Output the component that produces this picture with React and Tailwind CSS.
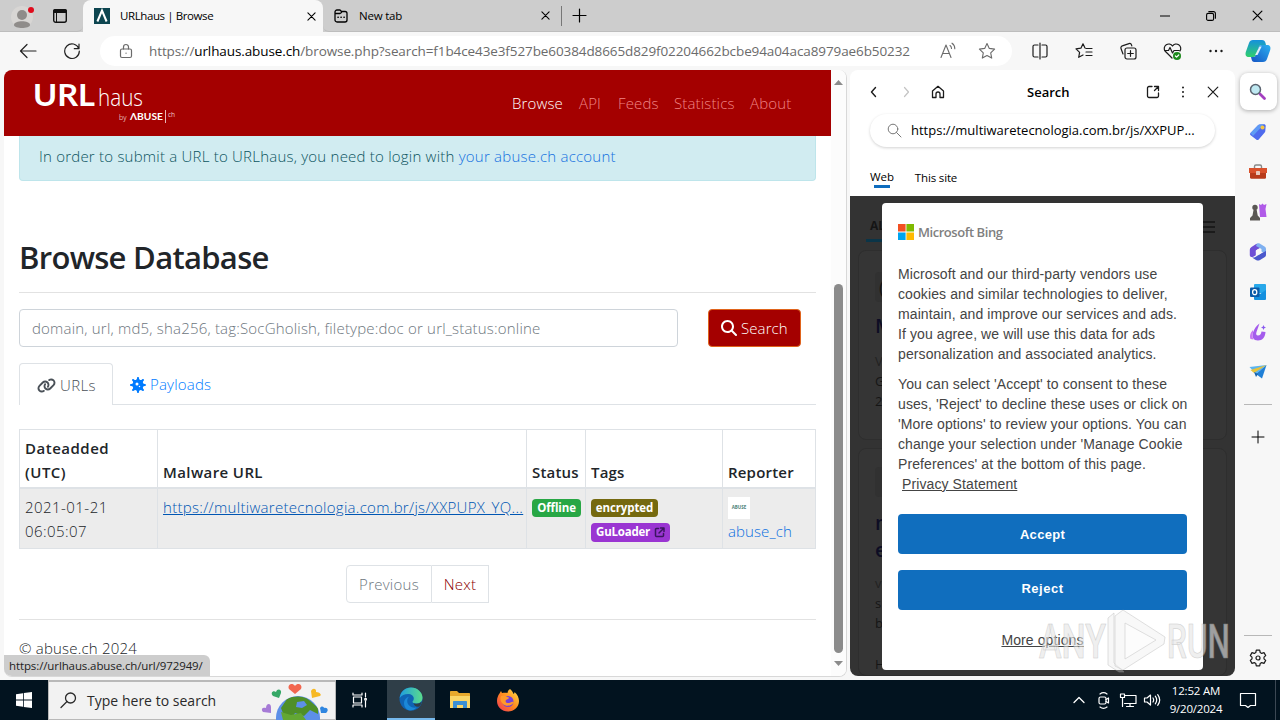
import { FaLink, FaMagnifyingGlass, FaVirus } from "react-icons/fa6";

const NAV = [
  { label: "Browse", cls: "w-[67px] text-white" },
  { label: "API", cls: "w-[39px]" },
  { label: "Feeds", cls: "w-[56px]" },
  { label: "Statistics", cls: "w-[76px]" },
  { label: "About", cls: "w-[81px]" },
];

function Icon({ size = 20, sw = 1.2, className = "", children, box = 20 }) {
  return (
    <svg
      width={size}
      height={size}
      viewBox={`0 0 ${box} ${box}`}
      fill="none"
      stroke="currentColor"
      strokeWidth={sw}
      strokeLinecap="round"
      strokeLinejoin="round"
      className={`shrink-0 ${className}`}
    >
      {children}
    </svg>
  );
}

function Close({ size = 10, sw = 1.2 }) {
  return (
    <Icon size={size} box={10} sw={sw}>
      <path d="M1 1l8 8M9 1l-8 8" />
    </Icon>
  );
}

function TabStrip() {
  return (
    <div className="flex h-8 shrink-0 bg-[#cdcdcd]">
      <div className="flex w-[83px] items-center rounded-br-md border-b border-[#bdbdbd] pl-[11px]">
        <svg width="24" height="28" viewBox="0 0 24 28" className="shrink-0">
          <circle cx="11" cy="15" r="11" fill="#d8d6d4" />
          <circle cx="11" cy="13" r="5" fill="#8f8c8a" />
          <path d="M3 23c0-5 16-5 16 0 0 4-16 4-16 0z" fill="#8f8c8a" />
          <circle cx="20" cy="8" r="3" fill="#e00b1c" />
        </svg>
        <svg width="16" height="16" viewBox="0 0 16 16" className="ml-[17px] shrink-0">
          <rect x="1.7" y="1.7" width="12.6" height="12.6" rx="2" fill="none" stroke="#111" strokeWidth="1.4" />
          <path d="M1 5V3a2 2 0 0 1 2-2h10a2 2 0 0 1 2 2v2z" fill="#111" />
          <path d="M4.5 5v9" stroke="#111" />
        </svg>
      </div>
      <div className="flex w-[240px] items-center rounded-t-lg bg-[#f7f7f7] pl-[11px]">
        <svg width="16" height="16" viewBox="0 0 16 16" className="shrink-0">
          <rect width="16" height="16" fill="#0d4550" />
          <path d="M3.4 13.5L8 2.5l4.6 11" stroke="#fff" strokeWidth="2" fill="none" />
        </svg>
        <span className="ml-2.5 w-[187px] text-[11.5px] tracking-[-0.4px]">URLhaus | Browse</span>
        <Close size={9} />
      </div>
      <div className="flex w-[238px] items-center rounded-bl-md border-b border-[#bdbdbd] pl-[10px]">
        <Icon size={16} box={16} sw={1.3}>
          <path d="M2 4a2 2 0 0 1 2-2h3l1.5 1.5H12a2 2 0 0 1 2 2V12a2 2 0 0 1-2 2H4a2 2 0 0 1-2-2zM2 5.5h5l1.5-1" />
          <path d="M5 9.2h.2M8 9.2h.2M11 9.2h.2" strokeWidth="1.6" />
        </Icon>
        <span className="ml-[10px] w-[182px] text-[11.5px] tracking-[-0.2px]">New tab</span>
        <Close size={9} />
      </div>
      <div className="flex flex-1 items-center border-b border-[#bdbdbd]">
        <div className="h-5 w-px bg-[#777]" />
        <Icon size={15} box={15} className="ml-[10px]">
          <path d="M7.5 1v13M1 7.5h13" />
        </Icon>
        <div className="ml-auto flex items-center gap-9 pr-[17px]">
          <Icon size={10} box={10} sw={1}>
            <path d="M0 5h10" />
          </Icon>
          <Icon size={10} box={10} sw={1.1}>
            <rect x=".6" y="2.4" width="7" height="7" rx="1.5" />
            <path d="M2.8.6h4.800a1.8 1.8 0 0 1 1.8 1.8v4.800" />
          </Icon>
          <Close size={11} sw={1.1} />
        </div>
      </div>
    </div>
  );
}

function Toolbar() {
  return (
    <div className="flex h-[38px] shrink-0 items-center bg-[#f7f7f7]">
      <div className="flex w-[100px] items-center pl-[19px] text-[#222]">
        <Icon size={18} box={18}>
          <path d="M1.5 9H17M8 2.5L1.5 9 8 15.5" />
        </Icon>
        <Icon size={18} box={18} className="ml-[26px]">
          <path d="M15.8 6.5A7.3 7.3 0 1 0 16.3 9M16 2v4.7h-4.7" />
        </Icon>
      </div>
      <div className="flex h-[30px] w-[912px] items-center rounded-full bg-white pl-[18px] text-[#6b6b6b]">
        <Icon size={16} box={16}>
          <rect x="2.5" y="6" width="11" height="8.5" rx="1.5" />
          <path d="M5.5 6V4a2.5 2.5 0 0 1 5 0v2M8 10.2h.1" />
        </Icon>
        <span className="ml-[15px] w-[790px] whitespace-nowrap text-[13.5px] tracking-[-0.1px]">
          https://<span className="text-black">urlhaus.abuse.ch</span>
          /browse.php?search=f1b4ce43e3f527be60384d8665d829f02204662bcbe94a04aca8979ae6b50232
        </span>
        <Icon size={18} box={18} sw={1.1}>
          <path d="M2 15.500L7 3l5 12.500M3.800 11.500h6.400M11 3.500c1 .7 1.500 1.700 1.500 3M13 1.200c2 1.300 2.800 3.200 2.800 5.500" />
        </Icon>
        <Icon size={18} box={18} sw={1.1} className="ml-[21px]">
          <path d="M9 1.500l2.300 4.900 5.300.7-3.900 3.700 1 5.300L9 13.500l-4.700 2.600 1-5.300L1.400 7.100l5.300-.7z" />
        </Icon>
      </div>
      <div className="flex flex-1 items-center pl-[19px] text-[#1c1c1c]">
        <Icon size={18} box={18}>
          <path d="M7 3H3.500A1.500 1.500 0 0 0 2 4.500v9A1.500 1.500 0 0 0 3.500 15H7M11 3h3.500A1.500 1.500 0 0 1 16 4.500v9a1.500 1.500 0 0 1-1.500 1.500H11M9 1v16" />
        </Icon>
        <Icon size={18} box={18} className="ml-[26px]">
          <path d="M10 6L8 1.800 5.900 6.200l-4.900.7 3.600 3.500-.9 4.900L8 13M11 6.500h6M11 10h6M11 13.500h6" />
        </Icon>
        <Icon size={18} box={18} className="ml-[26px]">
          <rect x="6" y="6" width="11" height="11" rx="2" />
          <path d="M11.500 8.700v5.600M8.700 11.500h5.600M4 12L2 6.500a2 2 0 0 1 1.300-2.600L10 1.600a2 2 0 0 1 2.500 1.300l.3 1" />
        </Icon>
        <Icon size={19} box={19} className="ml-[26px]">
          <path d="M9 16L2 9a4 4 0 0 1 7.500-5A4 4 0 0 1 17 9M1.500 8.500h4l1.500-3 2.500 5.500 1.500-2.500h5" />
          <circle cx="14" cy="14" r="4" fill="#1d8a1d" stroke="none" />
          <path d="M12.400 14l1.200 1.200 2.100-2.200" stroke="#fff" />
        </Icon>
        <Icon size={18} box={18} className="ml-[25px]">
          <g fill="currentColor" stroke="none">
            <circle cx="3.500" cy="9" r="1.200" />
            <circle cx="9" cy="9" r="1.200" />
            <circle cx="14.500" cy="9" r="1.200" />
          </g>
        </Icon>
        <svg width="26" height="24" viewBox="0 0 26 24" className="ml-[20px] shrink-0">
          <defs>
            <linearGradient id="copA" x1="0" y1="0" x2="0" y2="1">
              <stop offset="0" stopColor="#1590dd" />
              <stop offset="1" stopColor="#2fd06c" />
            </linearGradient>
            <linearGradient id="copB" x1="1" y1="0" x2="0" y2="1">
              <stop offset="0" stopColor="#2bb0f0" />
              <stop offset="1" stopColor="#1554c4" />
            </linearGradient>
          </defs>
          <path d="M8 1h9c2 0 3 1 3.500 3L21 6h-4c-2 0-3 1-3.600 3l-2 6.500c-.6 1.500-1.400 2.500-3.400 2.500H4c-3 0-4-2-3.200-5L4 4c.6-2 2-3 4-3z" fill="url(#copA)" />
          <path d="M18 23H9.500C7.500 23 7 22 6.500 20L6 18h2c2 0 2.800-1 3.400-3l2-6.500C14 7 15 6 17 6h5c3 0 4 2 3.200 5L22 20c-.6 2-2 3-4 3z" fill="url(#copB)" />
          <path d="M14.500 7.500h2.200L12.500 16h-2.400z" fill="#fff" fillOpacity=".85" />
        </svg>
      </div>
    </div>
  );
}

function SiteHeader() {
  return (
    <div className="flex h-[66px] shrink-0 items-start bg-[#a40000]">
      <svg width="160" height="48" viewBox="0 0 160 48" className="ml-[24px] mt-[6px] shrink-0" fill="#fff" fontFamily="Lato, sans-serif">
        <text x="5" y="30" fontSize="31" fontWeight="700" textLength="62" lengthAdjust="spacingAndGlyphs">URL</text>
        <text x="70" y="30" fontSize="23" fontWeight="300" fontFamily="Open Sans, sans-serif" textLength="45" lengthAdjust="spacingAndGlyphs">haus</text>
        <text x="91" y="44" fontSize="7" fontWeight="300" fontFamily="Open Sans, sans-serif">by</text>
        <text x="102" y="44" fontSize="10" fontWeight="700" textLength="33" lengthAdjust="spacingAndGlyphs">ΛBUSE</text>
        <path d="M137.500 34v13" stroke="#e9b5b5" />
        <text x="140" y="41" fontSize="6.5" fontFamily="Open Sans, sans-serif" fill="#f0c8c8">ch</text>
      </svg>
      <div className="ml-auto mt-[21px] flex text-[15px] leading-6 font-light tracking-[0.15px] text-[#f08585]">
        {NAV.map((n) => (
          <span key={n.label} className={n.cls}>
            {n.label}
          </span>
        ))}
      </div>
    </div>
  );
}

function MalwareTable() {
  const th = "border border-[#dee2e6] px-[5px] pb-[3px] font-semibold";
  const td = "border border-t-2 border-[#dee2e6] px-[5px]";

  return (
    <table className="mt-[24px] w-[796px] shrink-0 table-fixed border-collapse text-[15px] leading-6 text-[#212529]">
      <colgroup>
        <col className="w-[138px]" />
        <col className="w-[369px]" />
        <col className="w-[59px]" />
        <col className="w-[137px]" />
        <col className="w-[93px]" />
      </colgroup>
      <thead>
        <tr className="h-[58px] text-left align-bottom tracking-[0.2px]">
          <th className={`${th} tracking-[0.5px]`}>
            Dateadded
            <br />
            (UTC)
          </th>
          <th className={`${th} tracking-[0.4px]`}>Malware URL</th>
          <th className={th}>Status</th>
          <th className={th}>Tags</th>
          <th className={th}>Reporter</th>
        </tr>
      </thead>
      <tbody>
        <tr className="h-[61px] bg-[#ececec] align-top font-light">
          <td className={`${td} pt-[6px] tracking-[0.45px]`}>
            2021-01-21
            <br />
            06:05:07
          </td>
          <td className={`${td} pt-[6px] tracking-[0.3px] whitespace-nowrap text-[#0056b3] underline`}>
            https://multiwaretecnologia.com.br/js/XXPUPX_YQ...
          </td>
          <td className={`${td} pt-[10px]`}>
            <div className="flex h-[18px] w-[49px] items-center justify-center rounded bg-[#28a745] text-[11.5px] font-bold tracking-[-0.1px] text-white">
              Offline
            </div>
          </td>
          <td className={`${td} pt-[10px]`}>
            <div className="flex h-[18px] w-[67px] items-center justify-center rounded bg-[#75690f] text-[11.5px] font-bold tracking-[-0.1px] text-white">
              encrypted
            </div>
            <div className="mt-[6px] flex h-[19px] w-[79px] items-center gap-[4px] rounded bg-[#9a35d2] pl-[5px] text-[11.5px] font-bold tracking-[-0.2px] text-white">
              GuLoader
              <Icon size={11} box={11} sw={1.5} className="text-[#3b1560]">
                <path d="M4.500 1.500H2.500a1 1 0 0 0-1 1v6a1 1 0 0 0 1 1h6a1 1 0 0 0 1-1v-2M6.500 1h3.500v3.500M9.500 1.500L5 6" />
              </Icon>
            </div>
          </td>
          <td className={`${td} pt-[8px] text-[#0a6fe0]`}>
            <div className="flex h-[22px] w-[22px] items-center justify-center bg-white text-[4.5px] leading-none font-bold text-[#4d7f76]">
              ABUSE
            </div>
            <div className="leading-6 tracking-[0.1px]">abuse_ch</div>
          </td>
        </tr>
      </tbody>
    </table>
  );
}

function Site() {
  return (
    <div className="relative flex h-[607px] w-[843px] shrink-0 overflow-hidden rounded-lg border-r border-b border-[#d8d8d8] bg-white">
      <div className="flex w-[827px] flex-col">
        <SiteHeader />
        <div className="flex flex-col px-[15px] font-light">
          <div className="h-[45px] rounded-b border border-t-0 border-[#bee5eb] bg-[#d1ecf1] pt-[8px] pl-[19px] text-[15px] leading-6 tracking-[0.22px] text-[#0c5460]">
            In order to submit a URL to URLhaus, you need to login with{" "}
            <span className="text-[#1370e0]">your abuse.ch account</span>
          </div>
          <h1 className="mt-[57px] h-[55px] border-b border-[#e2e2e2] text-[31px] leading-[38px] font-semibold tracking-[-0.7px] text-[#212529]">
            Browse Database
          </h1>
          <div className="mt-4 flex">
            <div className="flex h-[38px] w-[659px] items-center rounded border border-[#ced4da] pl-3 text-[15px] tracking-[0.19px] text-[#6c757d]">
              domain, url, md5, sha256, tag:SocGholish, filetype:doc or url_status:online
            </div>
            <div className="ml-[30px] flex h-[38px] w-[93px] items-center gap-1 rounded border border-[#e0641c] bg-[#a40000] pl-3 text-[15px] tracking-[0.1px] text-white">
              <FaMagnifyingGlass size={16} />
              Search
            </div>
          </div>
          <div className="mt-4 flex h-[42px] text-[15px]">
            <div className="flex w-[94px] items-center gap-1 rounded-t border border-b-0 border-[#dee2e6] pt-px pl-[17px] tracking-[0.4px] text-[#495057]">
              <FaLink size={19} />
              URLs
            </div>
            <div className="flex flex-1 items-center gap-1 border-b border-[#dee2e6] pt-[2px] pl-[17px] tracking-[0.2px] text-[#007bff]">
              <FaVirus size={16} />
              Payloads
            </div>
          </div>
          <MalwareTable />
          <div className="mt-4 flex h-[38px] justify-center text-[15px] leading-[37px]">
            <div className="w-[86px] rounded-l border border-[#dee2e6] text-center tracking-[0.25px] text-[#6c757d]">Previous</div>
            <div className="w-[57px] border border-l-0 border-[#dee2e6] text-center tracking-[0.2px] text-[#8b0000]">Next</div>
          </div>
          <div className="mt-4 border-t border-[#e2e2e2] pt-[16px] text-[15px] leading-6 tracking-[0.2px] text-[#212529]">
            © abuse.ch 2024
          </div>
        </div>
      </div>
      <div className="flex w-[15px] flex-col items-center bg-[#fcfcfc] pt-[10px]">
        <svg width="9" height="5" viewBox="0 0 9 5">
          <path d="M0 5L4.500 0 9 5z" fill="#8b8b8b" />
        </svg>
        <div className="mt-[199px] h-[369px] w-[9px] rounded-full bg-[#8b8b8b]" />
        <svg width="9" height="5" viewBox="0 0 9 5" className="mt-[8px]">
          <path d="M0 0l4.500 5L9 0z" fill="#8b8b8b" />
        </svg>
      </div>
      <div className="absolute bottom-0 left-0 flex h-[21px] w-[206px] items-center rounded-tr-md bg-[#cdcdcd] pl-[5px] text-[11.5px] tracking-[-0.11px] text-[#222]">
        https://urlhaus.abuse.ch/url/972949/
      </div>
    </div>
  );
}

function DimmedResults() {
  return (
    <div className="flex w-[385px] flex-col text-[#151515]">
      <div className="flex h-[50px] items-start justify-between pr-[20px] pl-[16px]">
        <div className="h-[46px] w-[50px] border-b-[3px] border-[#0b3548] pt-[21px] pl-1 text-[12px] font-bold">ALL</div>
        <Icon size={14} box={14} sw={1.500} className="mt-[24px]">
          <path d="M0 2h14M0 7h14M0 12h14" />
        </Icon>
      </div>
      <div className="mx-2 mt-1 h-[190px] rounded-lg border border-[#2e2e2e] bg-[#353535] pl-4">
        <div className="mt-[21px] flex h-[30px] w-[30px] items-center rounded bg-[#313131] pl-1 text-[18px]">(</div>
        <div className="mt-[8px] text-[20px] leading-8 font-semibold text-[#0d0d24]">M</div>
        <div className="mt-[9px] text-[13px] leading-5">
          <span className="text-[#222]">V</span>
          <br />G<br />2
        </div>
      </div>
      <div className="mx-2 mt-2 h-[228px] rounded-lg border border-[#2e2e2e] bg-[#353535] pl-4">
        <div className="mt-[18px] h-[30px] w-[30px] rounded bg-[#313131]" />
        <div className="mt-[12px] text-[20px] leading-[27px] font-semibold text-[#0d0d24]">
          m<br />e
        </div>
        <div className="mt-[10px] text-[13px] leading-5">
          <span className="text-[#222]">v</span>
          <br />s<br />b
        </div>
        <div className="mt-[21px] text-[13px] leading-5">H</div>
      </div>
    </div>
  );
}

function ConsentDialog() {
  return (
    <div className="absolute top-[7px] left-[32px] flex h-[467px] w-[321px] flex-col rounded bg-white px-4 font-['Liberation_Sans',Arial,sans-serif] text-[14px] leading-5 text-[#444]">
      <div className="mt-[20px] flex h-[18px] items-center gap-1 font-['Open_Sans',sans-serif]">
        <svg width="16" height="16" viewBox="0 0 16 16" className="shrink-0">
          <path d="M0 0h7.600v7.600H0z" fill="#f25022" />
          <path d="M8.400 0H16v7.600H8.400z" fill="#7fba00" />
          <path d="M0 8.400h7.600V16H0z" fill="#00a4ef" />
          <path d="M8.400 8.400H16V16H8.400z" fill="#ffb900" />
        </svg>
        <span className="text-[13px] font-semibold tracking-[-0.45px] whitespace-nowrap text-[#808080]">Microsoft Bing</span>
      </div>
      <p className="mt-[23px] tracking-[0.1px] whitespace-nowrap">
        Microsoft and our third-party vendors use
        <br />
        cookies and similar technologies to deliver,
        <br />
        maintain, and improve our services and ads.
        <br />
        If you agree, we will use this data for ads
        <br />
        personalization and associated analytics.
      </p>
      <p className="mt-[10px] tracking-[0.1px] whitespace-nowrap">
        You can select 'Accept' to consent to these
        <br />
        uses, 'Reject' to decline these uses or click on
        <br />
        'More options' to review your options. You can
        <br />
        change your selection under 'Manage Cookie
        <br />
        Preferences' at the bottom of this page.
        <br />
        &nbsp;<span className="underline">Privacy Statement</span>
      </p>
      <div className="mt-[20px] h-10 rounded bg-[#106ebe] text-center text-[13px] leading-[41px] font-bold tracking-[0.3px] text-white">
        Accept
      </div>
      <div className="mt-4 h-10 rounded bg-[#106ebe] text-center text-[13px] leading-[37px] font-bold tracking-[0.5px] text-white">
        Reject
      </div>
      <div className="mt-[20px] text-center tracking-[0.1px] underline">More options</div>
    </div>
  );
}

function SearchPanel() {
  return (
    <div className="ml-[3px] flex h-[606px] w-[385px] shrink-0 flex-col overflow-hidden rounded-lg bg-white">
      <div className="flex h-[44px] items-center pl-[16px] text-[#1c1c1c]">
        <Icon size={16} box={16} sw={1.4}>
          <path d="M9.500 3.500L5.500 8l4 4.500" />
        </Icon>
        <Icon size={16} box={16} sw={1.2} className="ml-[16px] text-[#c4c4c4]">
          <path d="M6.500 3.500l4 4.500-4 4.500" />
        </Icon>
        <Icon size={16} box={16} sw={1.3} className="ml-[16px]">
          <path d="M2.500 7L8 2.300 13.500 7v6.500H10V10a2 2 0 0 0-4 0v3.500H2.500z" />
        </Icon>
        <span className="ml-[81px] w-[119px] pt-px text-[13px] font-semibold tracking-[0.02px] text-black">Search</span>
        <Icon size={14} box={14} sw={1.3}>
          <path d="M6 1.500H3A1.500 1.500 0 0 0 1.500 3v8A1.500 1.500 0 0 0 3 12.500h8a1.500 1.500 0 0 0 1.500-1.500V8M8.500 1.500h4v4M12.500 1.500l-4 4" />
        </Icon>
        <Icon size={14} box={14} className="ml-[16px]">
          <path d="M7 2.500v.1M7 7v.1M7 11.500v.1" strokeWidth="2" />
        </Icon>
        <span className="ml-[17px]">
          <Close size={12} sw={1} />
        </span>
      </div>
      <div className="mx-5 flex h-[33px] shrink-0 items-center rounded-full bg-white pl-[17px] text-[13px] text-black shadow-[0_1px_3px_rgba(0,0,0,0.18)]">
        <Icon size={15} box={15} sw={1} className="mb-px text-[#777]">
          <circle cx="6" cy="6" r="4.8" />
          <path d="M9.500 9.500l4.500 4.500" />
        </Icon>
        <span className="ml-[9px] whitespace-nowrap">https://multiwaretecnologia.com.br/js/XXPUP...</span>
      </div>
      <div className="flex h-[49px] shrink-0 items-start pt-[21px] pl-[20px] text-[11.5px] leading-[17px] tracking-[-0.1px] text-black">
        <div className="flex flex-col items-center">
          <span>Web</span>
          <div className="h-[3px] w-4 bg-[#0f6cbd]" />
        </div>
        <span className="ml-[21px] pt-px tracking-[-0.15px]">This site</span>
      </div>
      <div className="relative h-[480px] shrink-0 bg-[#333]">
        <DimmedResults />
        <ConsentDialog />
      </div>
    </div>
  );
}

function Sidebar() {
  return (
    <div className="flex w-[45px] flex-col items-center pt-[3px] pl-px">
      <div className="flex h-[37px] w-[37px] shrink-0 items-center justify-center rounded-lg bg-white shadow-[0_1px_4px_rgba(0,0,0,0.3)]">
        <svg width="18" height="18" viewBox="0 0 18 18">
          <path d="M11 11l4.500 4.500" stroke="#a33fc0" strokeWidth="2.800" strokeLinecap="round" />
          <circle cx="6.500" cy="6.500" r="5" fill="#bfe9f2" stroke="#5b6470" strokeWidth="1.500" />
        </svg>
      </div>
      <svg width="18" height="18" viewBox="0 0 18 18" className="mt-[13px] shrink-0">
        <path d="M1.500 10L9 2.200c.5-.5 1-.7 1.700-.7l4.300-.3c1 0 1.700.7 1.700 1.700l-.4 5c0 .6-.2 1-.6 1.500l-6 7c-.8.8-1.700.8-2.500.1l-5.500-4.200c-.8-.7-.8-1.600-.2-2.300z" fill="#4f6bed" />
        <path d="M1.500 10L9 2.200c.5-.5 1-.7 1.700-.7l4.300-.3L4 13z" fill="#5f9bf5" />
        <circle cx="13.500" cy="4.500" r="2" fill="#f5c542" />
      </svg>
      <svg width="20" height="18" viewBox="0 0 20 18" className="mt-[22px] shrink-0">
        <path d="M6.500 5V3.500c0-1 .7-1.500 1.500-1.500h4c.8 0 1.500.5 1.500 1.500V5" fill="none" stroke="#888" strokeWidth="1.400" />
        <path d="M1 5h18v5H1z" fill="#d9512c" />
        <path d="M2 10h16v4.500c0 .8-.5 1.200-1.200 1.200H3.200c-.7 0-1.200-.5-1.200-1.200z" fill="#b83b1b" />
        <rect x="8" y="8" width="4" height="4" rx=".6" fill="#e9c9bd" />
      </svg>
      <svg width="20" height="20" viewBox="0 0 20 20" className="mt-[21px] shrink-0">
        <path d="M11 2l2 1 1.500-1.500L16 3l2.500-1-1 5 1 8H12z" fill="#b05be8" />
        <circle cx="7" cy="5.500" r="2.700" fill="#5a5754" />
        <path d="M5.500 8h3.200l1 5.500 2.300 2.500v2.500H2V16l2.500-2.500z" fill="#5a5754" />
      </svg>
      <svg width="20" height="20" viewBox="0 0 20 20" className="mt-[20px] shrink-0">
        <path d="M8.500 1.800L3.500 5C2.300 5.800 1.800 6.800 1.800 8v5c0 2 2 2.500 3.500 1.700l2.500-1.500V8.500L13 5.200z" fill="#6e4fd6" />
        <path d="M9 1.600c1-.5 2-.4 3 .1l4.500 2.800C17.700 5.300 18 6 18 7.500V12l-4.500-2.500V7L8 4z" fill="#7fb0f0" />
        <path d="M18 9v3.500c0 1.400-.5 2.200-1.500 2.800L12 18c-1.400.8-2.600.8-4 0l-4-2.500c2 .3 3.500-.5 4.500-1.300l5-3z" fill="#4a58cc" />
        <circle cx="10.500" cy="9.800" r="2.600" fill="#f7f7f7" />
      </svg>
      <svg width="18" height="18" viewBox="0 0 18 18" className="mt-[21px] shrink-0">
        <rect x="5" y="1" width="12" height="9" rx="1" fill="#28a8ea" />
        <path d="M5 7l6 4 6-4v9a1 1 0 0 1-1 1H6a1 1 0 0 1-1-1z" fill="#1490df" />
        <rect x="1" y="4.500" width="9.500" height="9.500" rx="1" fill="#0a5aa8" />
        <ellipse cx="5.700" cy="9.200" rx="2.100" ry="2.500" fill="none" stroke="#fff" strokeWidth="1.300" />
      </svg>
      <svg width="20" height="20" viewBox="0 0 20 20" className="mt-[21px] shrink-0">
        <path d="M11.500 1.500l-3 8.500c-.8 2.200-.2 3.500 1.500 3.500 2 0 3.200-1.500 3.500-4l4 .5c-.3 5-3 8.500-7.500 8.500-4.500 0-6.500-3.500-5-8C6 7.500 8 4 11.500 1.500z" fill="#a45cec" />
        <path d="M5 8c-3 3-3.500 6.500-2.500 9l3 .5c-1.200-2-1.200-5-.5-7z" fill="#c879f2" />
        <path d="M15.500 3l.8 1.700 1.700.8-1.700.8-.8 1.700-.8-1.700-1.700-.8 1.700-.8z" fill="#8b5cef" />
      </svg>
      <svg width="18" height="16" viewBox="0 0 18 16" className="mt-[22px] shrink-0">
        <path d="M0.500 3L17.500 1 7 10z" fill="#5bb4f0" />
        <path d="M17.500 1L13 14.500 7 10z" fill="#1f7fd6" />
        <path d="M1.500 6L17.500 1 5 9z" fill="#e8c33a" />
        <path d="M5 8l2 5 2-3z" fill="#1763ad" />
      </svg>
      <div className="mt-[24px] h-px w-7 shrink-0 bg-[#b8b8b8]" />
      <Icon size={14} box={14} sw={1} className="mt-[25px]">
        <path d="M7 1v12M1 7h12" />
      </Icon>
      <div className="mt-auto h-px w-7 shrink-0 bg-[#b8b8b8]" />
      <Icon size={20} box={20} className="mt-[12px] mb-[12px] text-[#1c1c1c]">
        <path d="M8.300 2.200h3.400l.5 2.300 1.500.9 2.300-.8 1.700 3-1.700 1.500v1.800l1.700 1.500-1.700 3-2.300-.8-1.500.9-.5 2.300H8.300l-.5-2.300-1.500-.9-2.300.8-1.700-3L4 10.900V9.100L2.300 7.600l1.700-3 2.300.8 1.500-.9z" />
        <circle cx="10" cy="10" r="2" />
      </Icon>
    </div>
  );
}

function Globe() {
  return (
    <svg width="76" height="38" viewBox="0 0 76 38" className="shrink-0">
      <defs>
        <clipPath id="globe">
          <circle cx="39" cy="36" r="22" />
        </clipPath>
      </defs>
      <g clipPath="url(#globe)">
        <rect x="10" y="10" width="60" height="30" fill="#5d8fe8" />
        <path d="M28 17c6-4 18-3 22 1l9 8v6l-8-4-6 6-9-3-3 5-8-2-3-8z" fill="#4f8f28" />
        <path d="M22 30l10 3 10-2 5 7H24z" fill="#63a733" />
        <path d="M38 20l7-1 3 4-5 3-6-1z" fill="#5d8fe8" />
      </g>
      <path d="M36 12l-6-5c-2-4 3-7 6-3 3-4 8-1 6 3z" fill="#f2664f" />
      <path d="M20 16l-6-2c-3-3 0-6 3-4 1-4 6-3 5 1z" fill="#35a866" />
      <path d="M53 16l-1-7c2-4 6-2 5 1 4 0 6 3 4 4z" fill="#f7b924" />
      <path d="M12 31L4 30c-3-4 1-5 3-4 0-5 5-5 5-1z" fill="#a67bd6" />
      <path d="M62 31l-1-5c2-3 4-1 4 0 4-1 5 3 2 5z" fill="#2f86e0" />
    </svg>
  );
}

function Taskbar() {
  return (
    <div className="flex h-10 shrink-0 items-center bg-[#02131f] text-white">
      <div className="flex w-12 justify-center">
        <svg width="16" height="16" viewBox="0 0 16 16" fill="#fff">
          <path d="M0 2.200L7 1.200v6.400H0zM7.800 1L16 0v7.600H7.800zM0 8.400h7v6.400l-7-1zM7.800 8.400H16V16l-8.200-1.100z" />
        </svg>
      </div>
      <div className="flex h-full w-[288px] items-center border border-t-2 border-[#b9b9b9] bg-[#f2f2f2] pl-[11px] text-[#2a2a2a]">
        <Icon size={17} box={17} sw={1.3}>
          <circle cx="10.500" cy="6" r="5" />
          <path d="M7 9.500L1 15.500" />
        </Icon>
        <span className="ml-[10px] w-[174px] text-[14px] tracking-[0.02px] whitespace-nowrap">Type here to search</span>
        <Globe />
      </div>
      <div className="flex w-[51px] justify-center pr-[3px]">
        <Icon size={16} box={16} sw={1.2}>
          <path d="M1 1v2h9V1M1 15v-2h9v2M1.500 5h8v6h-8zM13.500 1v4M13.500 9v6M12.800 6.500h1.500v1.500h-1.500z" />
        </Icon>
      </div>
      <div className="flex h-full w-12 items-center justify-center border-b-2 border-[#76b9ed] bg-[#2f3e48]">
        <svg width="24" height="24" viewBox="0 0 24 24">
          <defs>
            <linearGradient id="edgeTop" x1="0" y1="0" x2="1" y2="0">
              <stop offset="0" stopColor="#1e9de0" />
              <stop offset="1" stopColor="#5bdc8b" />
            </linearGradient>
          </defs>
          <circle cx="12" cy="12" r="11.500" fill="#0f64b4" />
          <path d="M.7 11C1.500 4.500 6.500.5 12 .5c6.500 0 11.500 5 11.500 10 0 4-3 6-6 6-2.500 0-4-.7-4-1.700 0-.7 1.300-1.200 1.300-3.300 0-2.500-2.500-4.500-5.800-4.500-3.500 0-6.500 1.500-8.300 4z" fill="url(#edgeTop)" />
          <path d="M14.500 16.200c3 1.200 6 .4 8.300-1.700-.3 2-1.300 3.700-2.600 5-3 .8-5.200-1-5.700-3.300z" fill="#2f3e48" />
          <path d="M8.500 12c-1.500 5 3 9.500 9 8.500-1.500 1.800-4 3-6.500 3C6 23 4 17 5.500 13.500 6.500 11 9 10 10 9.700 9.300 10.300 8.800 11 8.500 12z" fill="#1b88d8" />
        </svg>
      </div>
      <div className="flex w-[50px] justify-center">
        <svg width="22" height="20" viewBox="0 0 22 20">
          <path d="M1 2c0-.6.4-1 1-1h6l2 2h10c.6 0 1 .4 1 1v14H1z" fill="#e8a92c" />
          <path d="M1 6h20v12H1z" fill="#fbd667" />
          <path d="M4 18v-6c0-.6.4-1 1-1h12c.6 0 1 .4 1 1v6h-4v-3H8v3z" fill="#3b8fd4" />
        </svg>
      </div>
      <div className="flex w-[49px] justify-center pr-[3px]">
        <svg width="24" height="24" viewBox="0 0 24 24">
          <defs>
            <linearGradient id="fox" x1="1" y1="0" x2="0" y2="1">
              <stop offset="0" stopColor="#ffe14a" />
              <stop offset=".5" stopColor="#ff8a1e" />
              <stop offset="1" stopColor="#f0325a" />
            </linearGradient>
          </defs>
          <path d="M14 1c2 2 3 3 3.500 5 1-.5 1-1.500 1-2 3 2.500 4.500 6 4.500 9 0 6-5 10.500-11 10.500S1 19 1 13c0-3 1-5.500 2.500-7.500L5 3l1 2c2-.5 4-.5 5.500 0C11.500 3.500 12.500 2 14 1z" fill="url(#fox)" />
          <circle cx="12" cy="13.500" r="5.500" fill="#7540d8" />
          <path d="M5 8c2-1 5-.5 6 1l2 .5c0 1.500-2 1.500-3 2.500-1 1.500 0 3.500 3 3 2-.5 3-2 5-1-2 4-8 5-11 2S4 10 5 8z" fill="#ff9a2a" />
        </svg>
      </div>
      <div className="ml-auto flex h-full items-center">
        <Icon size={12} box={12} sw={1.3}>
          <path d="M1 8.500l5-5 5 5" />
        </Icon>
        <Icon size={18} box={18} sw={1.2} className="ml-[10px]">
          <rect x="4" y="6" width="7" height="7" rx="1.500" />
          <path d="M11 8.500l2.500-1.500v5L11 10.500M5 3c2-1.500 5-1.500 7 0M5 16c2 1.500 5 1.500 7 0" />
        </Icon>
        <Icon size={18} box={18} sw={1.2} className="ml-[6px]">
          <path d="M5.500 4.500H17v8H5.500M11 12.500V15M7.500 15.500h7M1.500 3h4v3.500h-4zM3.500 6.500v9" />
        </Icon>
        <Icon size={18} box={18} sw={1.2} className="ml-[6px]">
          <path d="M1.500 7v4h2.500l3.500 3V4L4 7zM10 7c.8 1.200.8 2.800 0 4M12.300 5.200c1.700 2.300 1.700 5.300 0 7.600M14.700 3.700c2.500 3.300 2.500 7.300 0 10.600" />
        </Icon>
        <div className="ml-[5px] w-[60px] text-center text-[11.5px] leading-[18px] tracking-[-0.2px] whitespace-nowrap">
          12:52 AM
          <br />
          9/20/2024
        </div>
        <Icon size={18} box={18} sw={1.2} className="ml-[13px]">
          <path d="M1.500 2.500h15v12h-5L9 16.500l-2.500-2h-5z" />
        </Icon>
        <div className="ml-[18px] h-full w-[5px] border-l border-[#3c4854]" />
      </div>
    </div>
  );
}

// Recorder logo laid over the lower right corner
function Watermark() {
  return (
    <svg
      width="210"
      height="72"
      viewBox="0 0 210 72"
      className="absolute top-[606px] left-[1031px] opacity-60"
      fontFamily="Roboto, sans-serif"
      fontWeight="500"
      fontSize="49"
      stroke="#a9a9a9"
      strokeWidth=".6"
      fill="#e6e6e6"
    >
      <text x="8" y="52" textLength="67" lengthAdjust="spacingAndGlyphs">ANY</text>
      <text x="136" y="52" textLength="63" lengthAdjust="spacingAndGlyphs">RUN</text>
      <path d="M77 12l6-5v50l10 9-5 0-11-7z" fillOpacity=".5" />
      <path d="M84 10l8-6 42 27-1 7-41 26-8-4z" fillOpacity=".45" />
      <path d="M94 17l31 17-31 19z" fill="#fff" fillOpacity=".6" />
    </svg>
  );
}

export default function App() {
  return (
    <div className="relative flex h-[720px] w-[1280px] flex-col overflow-hidden bg-[#f7f7f7] font-['Open_Sans','Noto_Sans',sans-serif] text-black">
      <TabStrip />
      <Toolbar />
      <div className="flex h-[610px] shrink-0 pl-1">
        <Site />
        <SearchPanel />
        <Sidebar />
      </div>
      <Taskbar />
      <Watermark />
    </div>
  );
}
